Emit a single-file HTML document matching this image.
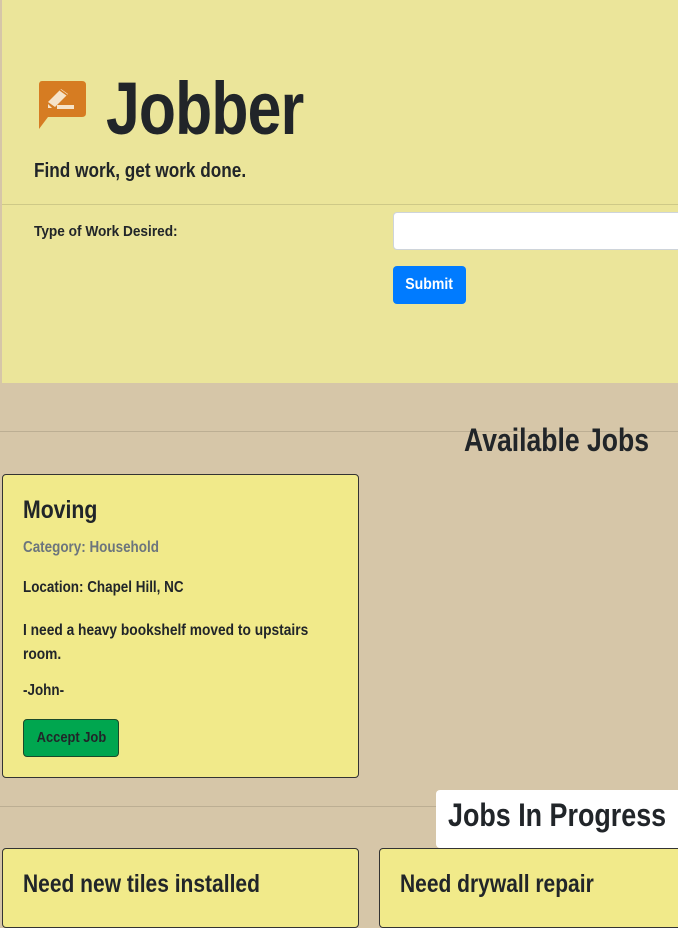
<!DOCTYPE html>
<html><head><style>
*{margin:0;padding:0;box-sizing:border-box}
body{width:678px;height:902px;overflow:hidden;background:#d6c6a8;font-family:"Liberation Sans",sans-serif;font-weight:bold;color:#212529;position:relative}
.hdr{position:absolute;left:2px;top:0;width:676px;height:383px;background:#ebe59a}
.abs{position:absolute;white-space:nowrap;transform-origin:0 0}
.card{position:absolute;background:#f1ea8a;border:1px solid #333;border-radius:4px}
hr{position:absolute;border:0;border-top:1px solid rgba(0,0,0,.12)}
</style></head><body>
<div class="hdr"></div>
<svg class="abs" style="left:38px;top:81px" width="48" height="48" viewBox="0 0 48 48">
<path d="M4 0H44Q48 0 48 4V32Q48 36 44 36H10L1 48V4Q1 0 4 0Z" fill="#d67c22"/>
<path d="M10 21L23 8L30 13L17 26Z" fill="#f6e3c9"/>
<path d="M10 23L10 27L14 27Z M19 24H36V28H19Z" fill="#f6e3c9"/>
<path d="M22 9L29 14" stroke="#d67c22" stroke-width="1.5"/>
</svg>
<div class="abs" style="left:106px;top:64px;font-size:74px;line-height:90px;letter-spacing:-1px;transform:scaleX(.82)">Jobber</div>
<div class="abs" style="left:34px;top:160px;font-size:20px;transform:scaleX(.86)">Find work, get work done.</div>
<hr style="left:2px;top:204px;width:676px">
<div class="abs" style="left:34px;top:223px;font-size:15px;transform:scaleX(.91)">Type of Work Desired:</div>
<div class="abs" style="left:393px;top:212px;width:300px;height:38px;background:#fff;border:1px solid #ced4da;border-radius:4px"></div>
<div class="abs" style="left:393px;top:266px;width:73px;height:38px;background:#007bff;color:#fff;border-radius:4px;font-size:16px;line-height:38px;text-align:center"><span style="display:inline-block;transform:scaleX(.88)">Submit</span></div>
<hr style="left:0;top:431px;width:678px">
<div class="abs" style="left:464px;top:422px;font-size:32px;transform:scaleX(.83)">Available Jobs</div>
<div class="card" style="left:2px;top:474px;width:357px;height:304px">
<div class="abs" style="left:20px;top:21px;font-size:25px;transform:scaleX(.85)">Moving</div>
<div class="abs" style="left:20px;top:64px;font-size:16px;color:#6c757d;transform:scaleX(.84)">Category: Household</div>
<div class="abs" style="left:20px;top:104px;font-size:16px;transform:scaleX(.84)">Location: Chapel Hill, NC</div>
<div class="abs" style="left:20px;top:144px;font-size:16px;line-height:24px;transform:scaleX(.86)">I need a heavy bookshelf moved to upstairs<br>room.</div>
<div class="abs" style="left:20px;top:207px;font-size:16px;transform:scaleX(.84)">-John-</div>
<div class="abs" style="left:20px;top:244px;width:96px;height:38px;background:#00a64f;border:1px solid #1a4a2a;border-radius:4px;font-size:15px;line-height:36px;text-align:center"><span style="display:inline-block;transform:scaleX(.86)">Accept Job</span></div>
</div>
<hr style="left:0;top:806px;width:678px">
<div class="abs" style="left:436px;top:790px;width:242px;height:58px;background:#fff;border-radius:4px 0 0 4px"></div>
<div class="abs" style="left:448px;top:797px;font-size:32px;transform:scaleX(.84)">Jobs In Progress</div>
<div class="card" style="left:2px;top:848px;width:357px;height:80px"><div class="abs" style="left:20px;top:21px;font-size:25px;transform:scaleX(.84)">Need new tiles installed</div></div>
<div class="card" style="left:379px;top:848px;width:320px;height:80px"><div class="abs" style="left:20px;top:21px;font-size:25px;transform:scaleX(.84)">Need drywall repair</div></div>
</body></html>
